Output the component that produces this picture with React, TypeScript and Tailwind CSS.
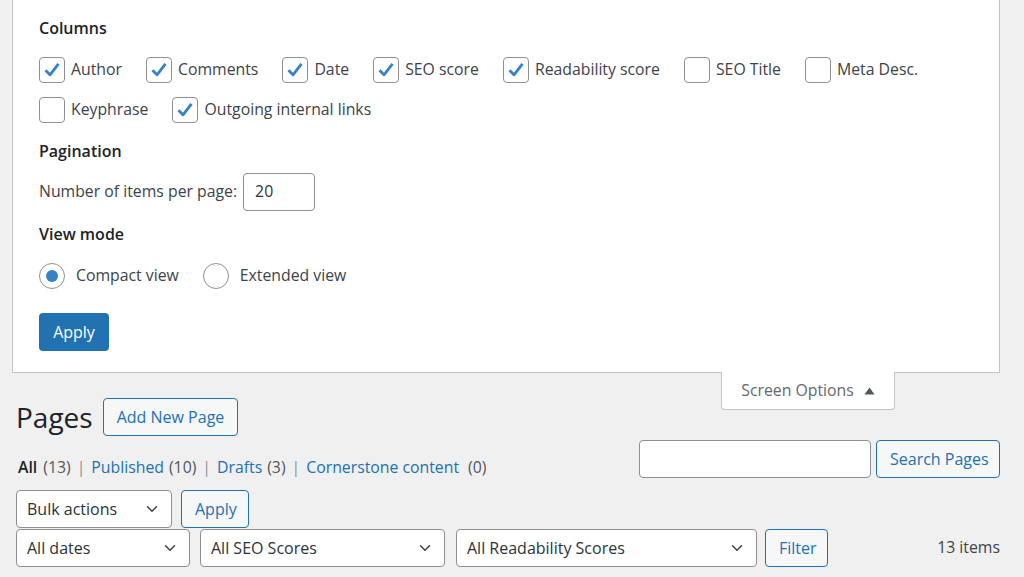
import type { JSX } from 'react';
import { ChevronDown } from 'lucide-react';

const COLUMNS = [
  { label: 'Author', checked: true },
  { label: 'Comments', checked: true },
  { label: 'Date', checked: true },
  { label: 'SEO score', checked: true },
  { label: 'Readability score', checked: true },
  { label: 'SEO Title', checked: false },
  { label: 'Meta Desc.', checked: false },
  { label: 'Keyphrase', checked: false },
  { label: 'Outgoing internal links', checked: true },
];

function Checkbox({ checked }: { checked: boolean }): JSX.Element {
  return (
    <span className="w-[26px] h-[26px] shrink-0 rounded-[4px] border border-[#8c8f94] bg-white flex items-center justify-center">
      {checked && (
        <svg width="20" height="20" viewBox="0 0 20 20">
          <path d="M3.5 10.2 L8 14.8 L16.5 3.8" fill="none" stroke="#3582c4" strokeWidth="2.8" strokeLinejoin="round" />
        </svg>
      )}
    </span>
  );
}

function Radio({ checked }: { checked: boolean }): JSX.Element {
  return (
    <span className="w-[26px] h-[26px] shrink-0 rounded-full border border-[#8c8f94] bg-white flex items-center justify-center">
      {checked && <span className="w-[12px] h-[12px] rounded-full bg-[#3582c4]" />}
    </span>
  );
}

function Select({ label, width }: { label: string; width: string }): JSX.Element {
  return (
    <div className={`${width} h-[38px] rounded-[4px] border border-[#8c8f94] bg-white flex items-center justify-between pl-[10px] pr-[10px] text-[#2c3338]`}>
      <span className="text-[16px]">{label}</span>
      <ChevronDown size={18} strokeWidth={2} className="text-[#3c434a]" />
    </div>
  );
}

function SecondaryButton({ label, className = '' }: { label: string; className?: string }): JSX.Element {
  return (
    <button className={`h-[38px] whitespace-nowrap rounded-[4px] border border-[#2271b1] bg-[#f6f7f7] text-[#2271b1] text-[16px] px-[13px] ${className}`}>
      {label}
    </button>
  );
}

export default function App(): JSX.Element {
  return (
    <div className="min-h-screen bg-[#f0f0f1] pl-3 pr-6 text-[#3c434a] text-[15.8px] font-['Open_Sans','Noto_Sans',sans-serif]">

      {/* Screen options panel */}
      <div className="relative">
        <div className="bg-white border-x border-b border-[#c3c4c7] pl-[26px] pt-[15px] pb-[21px]">
          <h5 className="text-[#1d2327] font-semibold text-[16px] leading-[26px]">Columns</h5>
          <div className="mt-[16px] flex flex-wrap gap-x-6 gap-y-[14px] w-[930px]">
            {COLUMNS.map(({ label, checked }) => (
              <label key={label} className="flex items-center gap-[6px]">
                <Checkbox checked={checked} />
                <span>{label}</span>
              </label>
            ))}
          </div>

          <h5 className="mt-[15px] text-[#1d2327] font-semibold text-[16px] leading-[26px]">Pagination</h5>
          <div className="mt-[9px] flex items-center gap-[6px]">
            <span>Number of items per page:</span>
            <div className="w-[72px] h-[38px] rounded-[4px] border border-[#8c8f94] bg-white flex items-center pl-[11px] text-[#2c3338]">20</div>
          </div>

          <h5 className="mt-[10px] text-[#1d2327] font-semibold text-[16px] leading-[26px]">View mode</h5>
          <div className="mt-[16px] flex items-center">
            <label className="flex items-center gap-[11px]">
              <Radio checked />
              <span>Compact view</span>
            </label>
            <label className="ml-[24px] flex items-center gap-[11px]">
              <Radio checked={false} />
              <span>Extended view</span>
            </label>
          </div>

          <button className="mt-[24px] h-[38px] w-[70px] rounded-[4px] bg-[#2271b1] text-white text-[16px]">Apply</button>
        </div>

        {/* Screen Options tab */}
        <div className="absolute right-[105px] top-full -mt-px w-[174px] h-[38px] bg-white border-x border-b border-[#c3c4c7] rounded-b-[4px] flex items-center justify-center gap-[10px] text-[#646970] text-[15.8px]">
          <span>Screen Options</span>
          <svg width="11" height="8" viewBox="0 0 11 8"><path d="M0.5 7.5 L5.5 0.5 L10.5 7.5 Z" fill="#50575e" /></svg>
        </div>
      </div>

      <div className="pl-1">
        {/* Heading */}
        <div className="mt-[25px] flex items-center gap-[10px]">
          <h1 className="text-[#1d2327] text-[28px] leading-[38px]">Pages</h1>
          <SecondaryButton label="Add New Page" />
        </div>

        {/* Status links and search */}
        <div className="mt-[4px] flex justify-between items-start">
          <div className="mt-[17px] flex items-center text-[15.8px] leading-[20px] text-[#50575e]">
            <span className="text-[#1d2327] font-semibold ml-[2px]">All</span>
            <span className="ml-[6px]">(13)</span>
            <span className="mx-[6px] text-[#8c8f94]">|</span>
            <span className="text-[#2271b1]">Published</span>
            <span className="ml-[5px]">(10)</span>
            <span className="mx-[6px] text-[#8c8f94]">|</span>
            <span className="text-[#2271b1]">Drafts</span>
            <span className="ml-[5px]">(3)</span>
            <span className="mx-[6px] text-[#8c8f94]">|</span>
            <span className="text-[#2271b1]">Cornerstone content</span>
            <span className="ml-[9px]">(0)</span>
          </div>
          <div className="flex items-center gap-[5px]">
            <div className="w-[232px] h-[38px] rounded-[4px] border border-[#8c8f94] bg-white" />
            <SecondaryButton label="Search Pages" className="w-[124px] px-0" />
          </div>
        </div>

        {/* Bulk actions */}
        <div className="mt-[12px] flex items-center gap-[9px]">
          <Select label="Bulk actions" width="w-[156px]" />
          <SecondaryButton label="Apply" className="w-[68px] px-0" />
        </div>

        {/* Filters */}
        <div className="mt-px flex items-center">
          <Select label="All dates" width="w-[174px]" />
          <div className="ml-[10px]"><Select label="All SEO Scores" width="w-[245px]" /></div>
          <div className="ml-[11px]"><Select label="All Readability Scores" width="w-[301px]" /></div>
          <SecondaryButton label="Filter" className="ml-[8px] w-[63px] px-0" />
          <span className="ml-auto text-[#3c434a]">13 items</span>
        </div>
      </div>
    </div>
  );
}
